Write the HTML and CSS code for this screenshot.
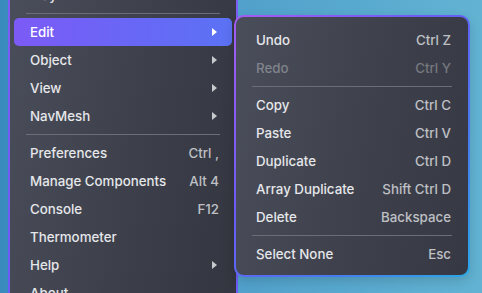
FILE: index.html
```html
<!DOCTYPE html>
<html lang="en">
<head>
    <meta charset="UTF-8">
    <meta name="viewport" content="width=device-width, initial-scale=1.0">
    <title>Menu</title>
    <link rel="stylesheet" href="styles.css">
</head>
<body>
    <div class="stage">
        <!-- Main menu -->
        <div class="menu main-menu">
            <div class="item"><span>Play</span><span class="key">Ctrl P</span></div>
            <div class="sep"></div>
            <div class="item active"><span>Edit</span><span class="arrow"></span></div>
            <div class="item"><span>Object</span><span class="arrow"></span></div>
            <div class="item"><span>View</span><span class="arrow"></span></div>
            <div class="item"><span>NavMesh</span><span class="arrow"></span></div>
            <div class="sep"></div>
            <div class="item"><span>Preferences</span><span class="key">Ctrl ,</span></div>
            <div class="item"><span>Manage Components</span><span class="key">Alt 4</span></div>
            <div class="item"><span>Console</span><span class="key">F12</span></div>
            <div class="item"><span>Thermometer</span></div>
            <div class="item"><span>Help</span><span class="arrow"></span></div>
            <div class="item"><span>About</span></div>
        </div>

        <!-- Edit submenu -->
        <div class="menu sub-menu">
            <div class="item"><span>Undo</span><span class="key">Ctrl Z</span></div>
            <div class="item disabled"><span>Redo</span><span class="key">Ctrl Y</span></div>
            <div class="sep"></div>
            <div class="item"><span>Copy</span><span class="key">Ctrl C</span></div>
            <div class="item"><span>Paste</span><span class="key">Ctrl V</span></div>
            <div class="item"><span>Duplicate</span><span class="key">Ctrl D</span></div>
            <div class="item"><span>Array Duplicate</span><span class="key">Shift Ctrl D</span></div>
            <div class="item"><span>Delete</span><span class="key">Backspace</span></div>
            <div class="sep"></div>
            <div class="item"><span>Select None</span><span class="key">Esc</span></div>
        </div>
    </div>
</body>
</html>
```

FILE: styles.css
```css
body {
    margin: 0;
    height: 100vh;
    overflow: hidden;
    font-family: Inter, "Noto Sans", sans-serif;
    background: linear-gradient(90deg, #3a8bbd 0%, #4f9fcb 45%, #62b3d3 100%);
}
.stage {
    display: flex;
    align-items: flex-start;
}
.menu {
    border: 2px solid transparent;
    padding: 8px 4px;
    color: #e6e7ea;
    font-size: 13.3px;
    font-weight: 500;
}
.main-menu {
    width: 218px;
    margin-top: -29px;
    margin-left: 8px;
    border-radius: 10px;
    background:
        linear-gradient(100deg, #4a4e5a 0%, #3d404b 55%, #33363f 100%) padding-box,
        linear-gradient(180deg, #805cf6, #6a5cf6) border-box;
}
.sub-menu {
    width: 224px;
    margin-top: 15px;
    margin-left: -4px;
    padding-top: 9px;
    padding-bottom: 7px;
    border-radius: 10px;
    background:
        linear-gradient(100deg, #4a4e5a 0%, #3e414c 55%, #363943 100%) padding-box,
        linear-gradient(135deg, #a55cf2 0%, #6a5cf5 40%, #4a78f0 70%, #2aa8e6 100%) border-box;
    box-shadow: 0 4px 12px rgba(0, 0, 0, 0.15);
}
.item {
    display: flex;
    align-items: center;
    justify-content: space-between;
    height: 28px;
    padding: 0 13px 0 16px;
    border-radius: 5px;
}
.item.active {
    color: #ffffff;
    background: linear-gradient(90deg, #7c5af6 0%, #6a66f6 50%, #5b72f4 100%);
}
.item.disabled {
    color: #80838b;
}
.key {
    color: #bfc0c5;
}
.disabled .key {
    color: #76787f;
}
.arrow {
    width: 0;
    height: 0;
    margin-right: 2px;
    border-top: 4px solid transparent;
    border-bottom: 4px solid transparent;
    border-left: 5px solid #c8c9cd;
}
.active .arrow {
    border-left-color: #ffffff;
}
.sep {
    height: 1px;
    margin: 4px 12px;
    background-color: #6b6e78;
}
```
